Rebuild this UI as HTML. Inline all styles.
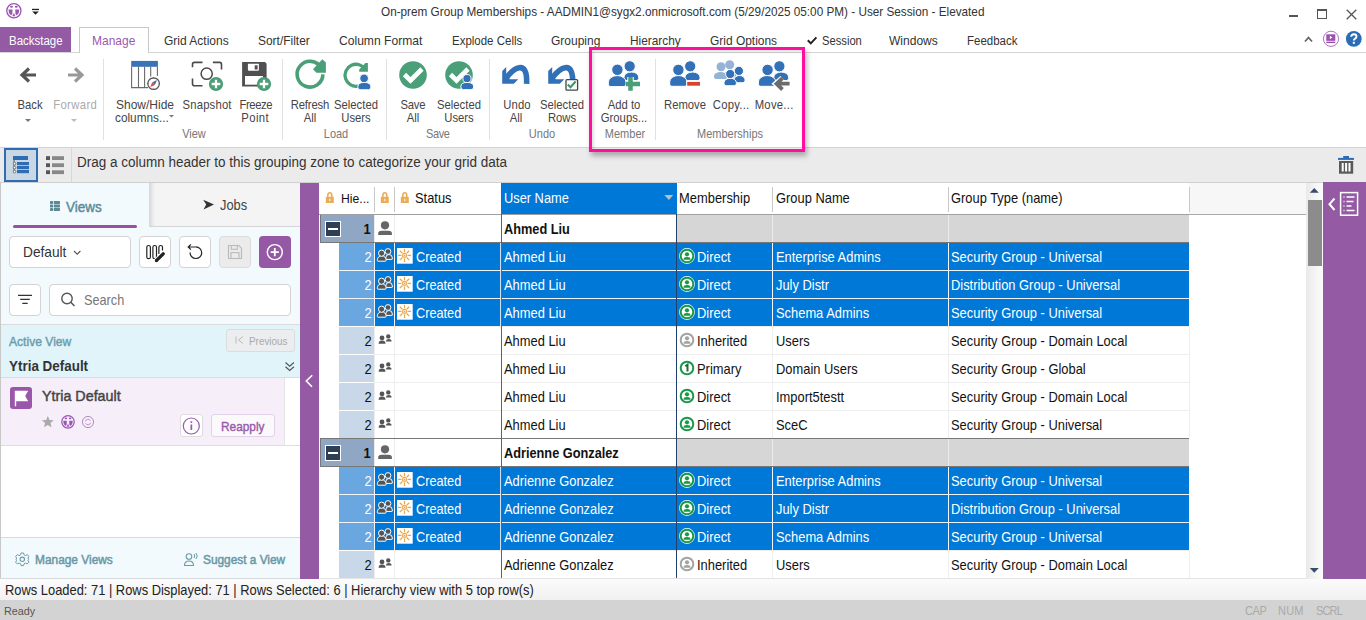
<!DOCTYPE html><html><head><meta charset="utf-8"><style>
html,body{margin:0;padding:0;}
body{width:1366px;height:620px;position:relative;overflow:hidden;background:#fff;font-family:'Liberation Sans', sans-serif;}
.t{position:absolute;white-space:nowrap;}
svg{overflow:visible;}
</style></head><body>
<svg style="position:absolute;left:0px;top:0px;" width="50" height="27" viewBox="0 0 50 27"><g transform="translate(13.87,10.7) scale(1.0)"><circle cx="0" cy="0" r="7.1" fill="none" stroke="#9b55b5" stroke-width="1.3"/><ellipse cx="-2.4" cy="-3.9" rx="1.5" ry="0.95" fill="#9b55b5"/><ellipse cx="2.4" cy="-3.9" rx="1.5" ry="0.95" fill="#9b55b5"/><path d="M-5.4,-1.2 H-1.35 L-1.6,3.4 Q-2.3,4.9 -3.2,4.4 Q-5.5,2.6 -5.4,-1.2Z M5.4,-1.2 H1.35 L1.6,3.4 Q2.3,4.9 3.2,4.4 Q5.5,2.6 5.4,-1.2Z" fill="#9b55b5"/><path d="M-1.6,5.6 L0,2.3 L1.6,5.6Z" fill="#9b55b5"/></g><rect x="32" y="8.8" width="7" height="1.3" fill="#222"/>
<path d="M32.2,11.5 L38.8,11.5 L35.5,14.8Z" fill="#222"/></svg>
<div class="t" style="left:380.5px;transform-origin:0 0;top:6.00px;font-size:12.70px;line-height:12.70px;color:#333;transform:scaleX(0.9259);">On-prem Group Memberships - AADMIN1@sygx2.onmicrosoft.com (5/29/2025 05:00 PM) - User Session - Elevated</div>
<div style="position:absolute;left:1289px;top:15.4px;width:9px;height:1.5px;background:#555;"></div>
<div style="position:absolute;left:1317px;top:9px;width:10px;height:9.6px;border:1px solid #555;border-top-width:2px;box-sizing:border-box;"></div>
<svg style="position:absolute;left:1346px;top:8.5px;" width="11" height="11" viewBox="0 0 11 11"><path d="M0.7,0.7 L10.3,10.3 M10.3,0.7 L0.7,10.3" stroke="#555" stroke-width="1.3"/></svg>
<div style="position:absolute;left:0px;top:52px;width:1366px;height:1px;background:#d4d4d4;"></div>
<div style="position:absolute;left:0px;top:27px;width:71px;height:25px;background:#945ba4;"></div>
<div class="t" style="left:9.4px;transform-origin:0 0;top:35.00px;font-size:12.42px;line-height:12.42px;color:#fff;transform:scaleX(0.9259);">Backstage</div>
<div style="position:absolute;left:79px;top:27px;width:70px;height:26px;background:#fff;border:1px solid #c9c9c9;border-bottom:none;box-sizing:border-box;"></div>
<div class="t" style="left:91.5px;transform-origin:0 0;top:35.00px;font-size:12.96px;line-height:12.96px;color:#9b59b0;transform:scaleX(0.9259);">Manage</div>
<div class="t" style="left:164px;transform-origin:0 0;top:35.00px;font-size:12.96px;line-height:12.96px;color:#333;transform:scaleX(0.9259);">Grid Actions</div>
<div class="t" style="left:258px;transform-origin:0 0;top:35.00px;font-size:12.91px;line-height:12.91px;color:#333;transform:scaleX(0.9259);">Sort/Filter</div>
<div class="t" style="left:339px;transform-origin:0 0;top:34.00px;font-size:13.07px;line-height:13.07px;color:#333;transform:scaleX(0.9259);">Column Format</div>
<div class="t" style="left:452px;transform-origin:0 0;top:35.00px;font-size:12.42px;line-height:12.42px;color:#333;transform:scaleX(0.9259);">Explode Cells</div>
<div class="t" style="left:551px;transform-origin:0 0;top:35.00px;font-size:12.96px;line-height:12.96px;color:#333;transform:scaleX(0.9259);">Grouping</div>
<div class="t" style="left:630.4px;transform-origin:0 0;top:35.00px;font-size:12.80px;line-height:12.80px;color:#333;transform:scaleX(0.9259);">Hierarchy</div>
<div class="t" style="left:710px;transform-origin:0 0;top:35.00px;font-size:12.91px;line-height:12.91px;color:#333;transform:scaleX(0.9259);">Grid Options</div>
<div class="t" style="left:821.5px;transform-origin:0 0;top:35.00px;font-size:12.10px;line-height:12.10px;color:#333;transform:scaleX(0.9259);">Session</div>
<div class="t" style="left:889px;transform-origin:0 0;top:34.00px;font-size:13.01px;line-height:13.01px;color:#333;transform:scaleX(0.9259);">Windows</div>
<div class="t" style="left:967px;transform-origin:0 0;top:35.00px;font-size:12.42px;line-height:12.42px;color:#333;transform:scaleX(0.9259);">Feedback</div>
<svg style="position:absolute;left:807px;top:35px;" width="12" height="10" viewBox="0 0 12 10"><path d="M0.8,5.3 L3.8,8.4 L9.4,2.4" fill="none" stroke="#222" stroke-width="2"/></svg>
<svg style="position:absolute;left:1304px;top:35px;" width="9" height="8" viewBox="0 0 9 8"><path d="M1,6.5 L4.5,2.5 L8,6.5" fill="none" stroke="#666" stroke-width="1.8"/></svg>
<svg style="position:absolute;left:1322px;top:30px;" width="18" height="18" viewBox="0 0 18 18"><circle cx="9" cy="8.8" r="7.6" fill="none" stroke="#a461b8" stroke-width="0.9"/>
<rect x="4.3" y="4.3" width="9" height="6.5" fill="#9b4fb0"/><rect x="4.3" y="11.6" width="9" height="1.5" fill="#9b4fb0"/>
<path d="M7.8,5.8 L10.6,7.5 L7.8,9.2Z" fill="#fff"/></svg>
<svg style="position:absolute;left:1345px;top:30px;" width="18" height="18" viewBox="0 0 18 18"><circle cx="8.8" cy="8.8" r="7.9" fill="#2a6cb5"/>
<path d="M6.2,6.8 Q6.3,4.2 8.9,4.2 Q11.5,4.2 11.5,6.6 Q11.5,8.2 9.6,9 Q8.8,9.4 8.8,10.6" fill="none" stroke="#fff" stroke-width="1.9"/>
<rect x="7.8" y="11.8" width="2" height="2" fill="#fff"/></svg>
<div style="position:absolute;left:0px;top:147px;width:1366px;height:1px;background:#d3d3d3;"></div>
<div style="position:absolute;left:103px;top:59px;width:1px;height:81px;background:#e1e1e1;"></div>
<div style="position:absolute;left:281.5px;top:59px;width:1px;height:81px;background:#e1e1e1;"></div>
<div style="position:absolute;left:385.5px;top:59px;width:1px;height:81px;background:#e1e1e1;"></div>
<div style="position:absolute;left:488.5px;top:59px;width:1px;height:81px;background:#e1e1e1;"></div>
<div style="position:absolute;left:654.5px;top:59px;width:1px;height:81px;background:#e1e1e1;"></div>
<svg style="position:absolute;left:18px;top:64px;" width="22" height="22" viewBox="0 0 22 22"><path d="M18,11 H5.5 M11,4.5 L4,11 L11,17.5" fill="none" stroke="#555" stroke-width="3.2" stroke-linejoin="miter"/></svg>
<svg style="position:absolute;left:66px;top:64px;" width="22" height="22" viewBox="0 0 22 22"><path d="M2,11 H14.5 M9,4.5 L16,11 L9,17.5" fill="none" stroke="#999" stroke-width="3.2"/></svg>
<div class="t" style="left:-170.5px;width:400px;text-align:center;transform-origin:50% 0;top:99.00px;font-size:12.20px;line-height:12.20px;color:#444;transform:scaleX(0.9259);">Back</div>
<div class="t" style="left:-125.5px;width:400px;text-align:center;transform-origin:50% 0;top:99.00px;font-size:12.20px;line-height:12.20px;color:#aaa;transform:scaleX(0.9259);letter-spacing:0.4px;text-indent:0.4px;">Forward</div>
<svg style="position:absolute;left:25px;top:119px;" width="6" height="4" viewBox="0 0 6 4"><path d="M0,0 L6,0 L3,3Z" fill="#777"/></svg>
<svg style="position:absolute;left:71px;top:119px;" width="6" height="4" viewBox="0 0 6 4"><path d="M0,0 L6,0 L3,3Z" fill="#bbb"/></svg>
<svg style="position:absolute;left:130px;top:60px;" width="34" height="32" viewBox="0 0 34 32"><rect x="1.2" y="0.9" width="26.7" height="5.9" fill="#3a72b8"/>
<path d="M1.6,6.8 V27.6 H18 M8.5,6.8 V27.6 M14.6,6.8 V27.6 M20.7,6.8 V16.5 M27.4,6.8 V16" fill="none" stroke="#6a6a6a" stroke-width="1.1"/>
<circle cx="23.6" cy="23.6" r="5.8" fill="#fff" stroke="#555" stroke-width="1.2"/>
<path d="M23.6,17.2 V18.5 M23.6,28.7 V30 M17.2,23.6 H18.5 M28.7,23.6 H30" stroke="#555" stroke-width="1"/>
<path d="M27,20.1 L24.9,24.9 L22.3,22.3Z" fill="#3a72b8"/><path d="M20.2,27.1 L22.3,22.3 L24.9,24.9Z" fill="#e04a3a"/></svg>
<div class="t" style="left:-55.5px;width:400px;text-align:center;transform-origin:50% 0;top:99.00px;font-size:12.96px;line-height:12.96px;color:#444;transform:scaleX(0.9259);">Show/Hide</div>
<div class="t" style="left:114.5px;transform-origin:0 0;top:112.00px;font-size:12.74px;line-height:12.74px;color:#444;transform:scaleX(0.9259);">columns...</div>
<svg style="position:absolute;left:169px;top:114.5px;" width="6" height="4" viewBox="0 0 6 4"><path d="M0,0 L5,0 L2.5,2.5Z" fill="#777"/></svg>
<div class="t" style="left:-6px;width:400px;text-align:center;transform-origin:50% 0;top:129.00px;font-size:11.88px;line-height:11.88px;color:#777;transform:scaleX(0.9259);">View</div>
<svg style="position:absolute;left:188px;top:56px;" width="40" height="40" viewBox="0 0 40 40"><path d="M4.5,11.2 V8.4 Q4.5,6.4 6.5,6.4 H14.5 M24.9,6.4 H31.5 Q33.5,6.4 33.5,8.4 V13.6 M4.5,22.6 V27.7 Q4.5,29.7 6.5,29.7 H14.5" fill="none" stroke="#4a4a4a" stroke-width="1.6"/>
<circle cx="18.7" cy="17.7" r="5.6" fill="none" stroke="#4a4a4a" stroke-width="1.5"/>
<circle cx="28" cy="28" r="7.1" fill="#4a9e78"/>
<path d="M28,23.7 V32.3 M23.7,28 H32.3" stroke="#fff" stroke-width="2.3"/></svg>
<div class="t" style="left:6.5px;width:400px;text-align:center;transform-origin:50% 0;top:99.00px;font-size:12.20px;line-height:12.20px;color:#444;transform:scaleX(0.9259);letter-spacing:0.2px;text-indent:0.2px;">Snapshot</div>
<svg style="position:absolute;left:240px;top:60px;" width="34" height="32" viewBox="0 0 34 32"><path d="M2.1,2.1 H25 L26.6,3.7 V26.6 H2.1Z" fill="#505050"/>
<path d="M7.9,3.7 H18.9 V9.8 Q18.9,10.8 17.9,10.8 H8.9 Q7.9,10.8 7.9,9.8Z" fill="#fff"/><rect x="14.7" y="5.3" width="2.9" height="4.2" fill="#505050"/>
<rect x="5" y="16" width="18" height="8.7" fill="#fff"/>
<circle cx="24" cy="24" r="7.1" fill="#4a9e78"/>
<path d="M24,19.7 V28.3 M19.7,24 H28.3" stroke="#fff" stroke-width="2.3"/></svg>
<div class="t" style="left:55.900000000000006px;width:400px;text-align:center;transform-origin:50% 0;top:99.00px;font-size:12.20px;line-height:12.20px;color:#444;transform:scaleX(0.9259);letter-spacing:-0.45px;text-indent:-0.45px;">Freeze</div>
<div class="t" style="left:55.30000000000001px;width:400px;text-align:center;transform-origin:50% 0;top:112.00px;font-size:12.20px;line-height:12.20px;color:#444;transform:scaleX(0.9259);letter-spacing:0.45px;text-indent:0.45px;">Point</div>
<svg style="position:absolute;left:290px;top:55px;" width="40" height="40" viewBox="0 0 40 40"><path d="M32.9,19.4 A12.9,12.9 0 1 1 31.2,12.8" fill="none" stroke="#4a9e78" stroke-width="3.6"/>
<path d="M32.3,4.3 L35.9,7.4 L35.9,17.8 L26.4,17.8 L23,14.2Z" fill="#4a9e78"/></svg>
<div class="t" style="left:109.5px;width:400px;text-align:center;transform-origin:50% 0;top:99.00px;font-size:12.20px;line-height:12.20px;color:#444;transform:scaleX(0.9259);letter-spacing:-0.15px;text-indent:-0.15px;">Refresh</div>
<div class="t" style="left:109.80000000000001px;width:400px;text-align:center;transform-origin:50% 0;top:112.00px;font-size:12.20px;line-height:12.20px;color:#444;transform:scaleX(0.9259);">All</div>
<svg style="position:absolute;left:340px;top:55px;" width="40" height="40" viewBox="0 0 40 40"><path d="M18,31.1 A11,11 0 1 1 25.4,14.5" fill="none" stroke="#4a9e78" stroke-width="3.3"/>
<path d="M25.4,7.9 L27.9,7.9 L27.9,16.8 L19.2,16.8 L19.2,14.6Z" fill="#4a9e78"/>
<circle cx="24.1" cy="23.4" r="4.3" fill="#3270b8" stroke="#fff" stroke-width="0.9"/>
<path d="M17.8,32 Q17.8,27.4 24.3,27.4 Q30.9,27.4 30.9,32 Q30.9,34.7 28.5,34.7 H20.2 Q17.8,34.7 17.8,32Z" fill="#3270b8" stroke="#fff" stroke-width="0.9"/></svg>
<div class="t" style="left:155.8px;width:400px;text-align:center;transform-origin:50% 0;top:99.00px;font-size:12.20px;line-height:12.20px;color:#444;transform:scaleX(0.9259);">Selected</div>
<div class="t" style="left:156.3px;width:400px;text-align:center;transform-origin:50% 0;top:112.00px;font-size:12.20px;line-height:12.20px;color:#444;transform:scaleX(0.9259);">Users</div>
<div class="t" style="left:135.5px;width:400px;text-align:center;transform-origin:50% 0;top:129.00px;font-size:11.88px;line-height:11.88px;color:#777;transform:scaleX(0.9259);">Load</div>
<svg style="position:absolute;left:398px;top:60px;" width="30" height="30" viewBox="0 0 30 30"><circle cx="15" cy="15" r="13.8" fill="#4a9e78"/>
<path d="M6.5,14.5 L12.5,20.5 L24,9" fill="none" stroke="#fff" stroke-width="4.6"/></svg>
<div class="t" style="left:213px;width:400px;text-align:center;transform-origin:50% 0;top:99.00px;font-size:12.20px;line-height:12.20px;color:#444;transform:scaleX(0.9259);letter-spacing:-0.3px;text-indent:-0.3px;">Save</div>
<div class="t" style="left:212.8px;width:400px;text-align:center;transform-origin:50% 0;top:112.00px;font-size:12.20px;line-height:12.20px;color:#444;transform:scaleX(0.9259);">All</div>
<svg style="position:absolute;left:444px;top:60px;" width="32" height="32" viewBox="0 0 32 32"><circle cx="15" cy="15" r="13.8" fill="#4a9e78"/>
<path d="M6.5,14.5 L12.5,20.5 L24,9" fill="none" stroke="#fff" stroke-width="4.6"/>
<circle cx="23" cy="18.6" r="4.1" fill="#3270b8" stroke="#fff" stroke-width="1"/>
<path d="M16.8,26.8 Q16.8,22.4 23.2,22.4 Q29.7,22.4 29.7,26.8 Q29.7,29.7 27,29.7 H19.5 Q16.8,29.7 16.8,26.8Z" fill="#3270b8" stroke="#fff" stroke-width="1"/></svg>
<div class="t" style="left:258.8px;width:400px;text-align:center;transform-origin:50% 0;top:99.00px;font-size:12.20px;line-height:12.20px;color:#444;transform:scaleX(0.9259);">Selected</div>
<div class="t" style="left:259.2px;width:400px;text-align:center;transform-origin:50% 0;top:112.00px;font-size:12.20px;line-height:12.20px;color:#444;transform:scaleX(0.9259);">Users</div>
<div class="t" style="left:238.39999999999998px;width:400px;text-align:center;transform-origin:50% 0;top:129.00px;font-size:11.88px;line-height:11.88px;color:#777;transform:scaleX(0.9259);letter-spacing:-0.4px;text-indent:-0.4px;">Save</div>
<svg style="position:absolute;left:496px;top:58px;" width="40" height="30" viewBox="0 0 40 30"><path d="M6.2,25.8 V13 L10.2,9 V16.8 L13.8,21.3 H22.3 L17.8,25.8Z" fill="#3270b8"/>
<path d="M30.6,25.8 C31.2,13.5 28,8.6 23,9.8 C18.5,10.6 14.5,14.5 10.5,19.5" fill="none" stroke="#3270b8" stroke-width="5.6"/></svg>
<div class="t" style="left:316.6px;width:400px;text-align:center;transform-origin:50% 0;top:99.00px;font-size:12.20px;line-height:12.20px;color:#444;transform:scaleX(0.9259);letter-spacing:0.1px;text-indent:0.1px;">Undo</div>
<div class="t" style="left:315.79999999999995px;width:400px;text-align:center;transform-origin:50% 0;top:112.00px;font-size:12.20px;line-height:12.20px;color:#444;transform:scaleX(0.9259);">All</div>
<svg style="position:absolute;left:542px;top:58px;" width="40" height="36" viewBox="0 0 40 36"><path d="M6.2,25.8 V13 L10.2,9 V16.8 L13.8,21.3 H22.3 L17.8,25.8Z" fill="#3270b8"/>
<path d="M30.6,25.8 C31.2,13.5 28,8.6 23,9.8 C18.5,10.6 14.5,14.5 10.5,19.5" fill="none" stroke="#3270b8" stroke-width="5.6"/><rect x="24" y="21.6" width="11.6" height="10.6" fill="#fff" stroke="#444" stroke-width="1.3" rx="1"/>
<path d="M25.8,26.4 L28.5,29.2 L33.6,23.6" fill="none" stroke="#3a9a6a" stroke-width="2.2"/></svg>
<div class="t" style="left:362px;width:400px;text-align:center;transform-origin:50% 0;top:99.00px;font-size:12.20px;line-height:12.20px;color:#444;transform:scaleX(0.9259);">Selected</div>
<div class="t" style="left:362.20000000000005px;width:400px;text-align:center;transform-origin:50% 0;top:112.00px;font-size:12.20px;line-height:12.20px;color:#444;transform:scaleX(0.9259);">Rows</div>
<div class="t" style="left:341.79999999999995px;width:400px;text-align:center;transform-origin:50% 0;top:129.00px;font-size:11.88px;line-height:11.88px;color:#777;transform:scaleX(0.9259);">Undo</div>
<svg style="position:absolute;left:600px;top:55px;" width="45" height="40" viewBox="0 0 45 40"><path d="M24,23.30 V22.10 A7.35,5.10 0 0 1 38.700000000000045,22.10 V23.30 Q38.700000000000045,25.5 36.50,25.5 H26.20 Q24,25.5 24,23.30Z" fill="#3270b8" stroke="#fff" stroke-width="1"/><circle cx="29.700000000000045" cy="11.299999999999997" r="5.6" fill="#3270b8" stroke="#fff" stroke-width="1"/><path d="M8.399999999999977,29.40 V27.20 A8.80,6.60 0 0 1 26,27.20 V29.40 Q26,31.599999999999994 23.80,31.599999999999994 H10.60 Q8.399999999999977,31.599999999999994 8.399999999999977,29.40Z" fill="#3270b8" stroke="#fff" stroke-width="1"/><circle cx="17.399999999999977" cy="14.799999999999997" r="5.7" fill="#3270b8" stroke="#fff" stroke-width="1"/><path d="M30.5,22 V35.8 M26,29 H40" stroke="#fff" stroke-width="6.5"/><path d="M30.5,22 V35.8 M26,29 H40" stroke="#4a9e78" stroke-width="4.5"/></svg>
<div class="t" style="left:424.20000000000005px;width:400px;text-align:center;transform-origin:50% 0;top:99.00px;font-size:12.20px;line-height:12.20px;color:#444;transform:scaleX(0.9259);">Add to</div>
<div class="t" style="left:423.6px;width:400px;text-align:center;transform-origin:50% 0;top:112.00px;font-size:12.20px;line-height:12.20px;color:#444;transform:scaleX(0.9259);">Groups...</div>
<div class="t" style="left:425.20000000000005px;width:400px;text-align:center;transform-origin:50% 0;top:129.00px;font-size:11.88px;line-height:11.88px;color:#777;transform:scaleX(0.9259);">Member</div>
<svg style="position:absolute;left:660px;top:55px;" width="45" height="40" viewBox="0 0 45 40"><path d="M25,23.40 V22.16 A7.50,5.16 0 0 1 40,22.16 V23.40 Q40,25.599999999999994 37.80,25.599999999999994 H27.20 Q25,25.599999999999994 25,23.40Z" fill="#3270b8" stroke="#fff" stroke-width="1"/><circle cx="30.200000000000045" cy="11.299999999999997" r="5.6" fill="#3270b8" stroke="#fff" stroke-width="1"/><path d="M9.700000000000045,29.10 V26.98 A8.65,6.48 0 0 1 27,26.98 V29.10 Q27,31.299999999999997 24.80,31.299999999999997 H11.90 Q9.700000000000045,31.299999999999997 9.700000000000045,29.10Z" fill="#3270b8" stroke="#fff" stroke-width="1"/><circle cx="18.399999999999977" cy="14.900000000000006" r="5.7" fill="#3270b8" stroke="#fff" stroke-width="1"/><rect x="26.2" y="25.9" width="14" height="5" fill="#fff"/><rect x="27.2" y="26.9" width="12.8" height="3.8" fill="#d9432e"/></svg>
<div class="t" style="left:484.70000000000005px;width:400px;text-align:center;transform-origin:50% 0;top:99.00px;font-size:12.20px;line-height:12.20px;color:#444;transform:scaleX(0.9259);">Remove</div>
<svg style="position:absolute;left:710px;top:55px;" width="45" height="40" viewBox="0 0 45 40"><path d="M14.5,20.30 V19.50 A5.75,4.50 0 0 1 26,19.50 V20.30 Q26,22.5 23.80,22.5 H16.70 Q14.5,22.5 14.5,20.30Z" fill="#95b3d6" /><circle cx="19.700000000000045" cy="9.700000000000003" r="4.5" fill="#95b3d6" /><path d="M4,21.90 V21.20 A6.50,4.20 0 0 1 17,21.20 V21.90 Q17,24 14.90,24 H6.10 Q4,24 4,21.90Z" fill="#95b3d6" /><circle cx="11" cy="11.799999999999997" r="4.5" fill="#95b3d6" /><path d="M24,25.54 V24.82 A5.50,4.32 0 0 1 35,24.82 V25.54 Q35,27.700000000000003 32.84,27.700000000000003 H26.16 Q24,27.700000000000003 24,25.54Z" fill="#3270b8" stroke="#fff" stroke-width="1"/><circle cx="28.899999999999977" cy="15.900000000000006" r="4.6" fill="#3270b8" stroke="#fff" stroke-width="1"/><path d="M14,28.50 V27.70 A6.20,4.50 0 0 1 26.399999999999977,27.70 V28.50 Q26.399999999999977,30.700000000000003 24.20,30.700000000000003 H16.20 Q14,30.700000000000003 14,28.50Z" fill="#3270b8" stroke="#fff" stroke-width="1"/><circle cx="20.200000000000045" cy="19" r="4.6" fill="#3270b8" stroke="#fff" stroke-width="1"/></svg>
<div class="t" style="left:530.6px;width:400px;text-align:center;transform-origin:50% 0;top:99.00px;font-size:12.20px;line-height:12.20px;color:#444;transform:scaleX(0.9259);letter-spacing:0.25px;text-indent:0.25px;">Copy...</div>
<svg style="position:absolute;left:755px;top:55px;" width="45" height="40" viewBox="0 0 45 40"><path d="M18.799999999999955,23.40 V22.16 A7.40,5.16 0 0 1 33.60000000000002,22.16 V23.40 Q33.60000000000002,25.599999999999994 31.40,25.599999999999994 H21.00 Q18.799999999999955,25.599999999999994 18.799999999999955,23.40Z" fill="#3270b8" stroke="#fff" stroke-width="1"/><circle cx="24.399999999999977" cy="11.299999999999997" r="5.6" fill="#3270b8" stroke="#fff" stroke-width="1"/><path d="M3.3999999999999773,29.10 V26.98 A8.70,6.48 0 0 1 20.799999999999955,26.98 V29.10 Q20.799999999999955,31.299999999999997 18.60,31.299999999999997 H5.60 Q3.3999999999999773,31.299999999999997 3.3999999999999773,29.10Z" fill="#3270b8" stroke="#fff" stroke-width="1"/><circle cx="12.600000000000023" cy="14.900000000000006" r="5.7" fill="#3270b8" stroke="#fff" stroke-width="1"/><path d="M34.6,28.7 H22 M27.5,23.2 L21,28.8 L27.5,34.5" fill="none" stroke="#fff" stroke-width="6"/><path d="M34.6,28.7 H22.5 M27.5,23.2 L21.5,28.8 L27.5,34.5" fill="none" stroke="#6b6b6b" stroke-width="3.8"/></svg>
<div class="t" style="left:573.5px;width:400px;text-align:center;transform-origin:50% 0;top:99.00px;font-size:12.20px;line-height:12.20px;color:#444;transform:scaleX(0.9259);letter-spacing:0.3px;text-indent:0.3px;">Move...</div>
<div class="t" style="left:529.8px;width:400px;text-align:center;transform-origin:50% 0;top:129.00px;font-size:11.88px;line-height:11.88px;color:#777;transform:scaleX(0.9259);">Memberships</div>
<div style="position:absolute;left:0px;top:148px;width:1366px;height:34px;background:#ebebeb;"></div>
<div style="position:absolute;left:4px;top:148px;width:34px;height:33.5px;background:#c9d6e3;border:2px solid #2e6db4;box-sizing:border-box;"></div>
<svg style="position:absolute;left:4px;top:148px;" width="34" height="34" viewBox="0 0 34 34"><rect x="9" y="8" width="15" height="4" fill="#2e6db4"/>
<rect x="13" y="14" width="12" height="3.2" fill="#2e6db4"/><rect x="13" y="18" width="12" height="3.2" fill="#2e6db4"/><rect x="13" y="22" width="12" height="3.2" fill="#2e6db4"/>
<path d="M10,12 V23.6" stroke="#555" stroke-width="0.9"/>
<circle cx="10.5" cy="15.6" r="1.3" fill="#fff" stroke="#555" stroke-width="0.8"/><circle cx="10.5" cy="19.6" r="1.3" fill="#fff" stroke="#555" stroke-width="0.8"/><circle cx="10.5" cy="23.6" r="1.3" fill="#fff" stroke="#555" stroke-width="0.8"/></svg>
<div style="position:absolute;left:71px;top:148px;width:1px;height:34px;background:#d8d8d8;"></div>
<svg style="position:absolute;left:40px;top:148px;" width="32" height="34" viewBox="0 0 32 34"><rect x="6" y="8.2" width="4" height="3.8" fill="#555"/><rect x="12" y="8.2" width="12" height="3.8" fill="#888"/>
<rect x="6" y="15.3" width="4" height="3.8" fill="#555"/><rect x="12" y="15.3" width="12" height="3.8" fill="#888"/>
<rect x="6" y="22.3" width="4" height="3.8" fill="#555"/><rect x="12" y="22.3" width="12" height="3.8" fill="#888"/></svg>
<div class="t" style="left:77.3px;transform-origin:0 0;top:155.00px;font-size:14.58px;line-height:14.58px;color:#333;transform:scaleX(0.9259);">Drag a column header to this grouping zone to categorize your grid data</div>
<svg style="position:absolute;left:1336px;top:154px;" width="20" height="22" viewBox="0 0 20 22"><rect x="2" y="3.9" width="16" height="2" fill="#2e6db4"/><rect x="7.2" y="2" width="5.8" height="2" fill="#2e6db4"/>
<rect x="3" y="7" width="14.2" height="12.7" fill="#5a5a5a"/><rect x="5.7" y="9" width="2" height="8.5" fill="#fff"/><rect x="9.1" y="9" width="2" height="8.5" fill="#fff"/><rect x="12.5" y="9" width="2" height="8.5" fill="#fff"/></svg>
<div style="position:absolute;left:0px;top:182px;width:1366px;height:1px;background:#d0d0d0;"></div>
<div style="position:absolute;left:0px;top:183px;width:300px;height:396px;background:#f3fafd;"></div>
<div style="position:absolute;left:0px;top:183px;width:1px;height:396px;background:#c8c8c8;"></div>
<div style="position:absolute;left:149px;top:183px;width:151px;height:44px;background:#f4f4f4;border-bottom:1px solid #d6d6d6;box-sizing:border-box;box-shadow:inset 6px 0 5px -4px rgba(0,0,0,0.16);"></div>
<div style="position:absolute;left:149px;top:191px;width:1px;height:36px;background:#d8d8d8;"></div>
<div style="position:absolute;left:1px;top:183px;width:148px;height:44px;background:#f3fafd;border-top-right-radius:6px;"></div>
<svg style="position:absolute;left:49px;top:200px;" width="12" height="12" viewBox="0 0 12 12"><g fill="#5b8a96"><rect x="1" y="1" width="3" height="2.9" rx="0.6"/><rect x="4.7" y="1" width="6.3" height="2.9" rx="0.6"/><rect x="1" y="4.5" width="3" height="2.9" rx="0.6"/><rect x="4.7" y="4.5" width="6.3" height="2.9" rx="0.6"/><rect x="1" y="8" width="3" height="2.9" rx="0.6"/><rect x="4.7" y="8" width="6.3" height="2.9" rx="0.6"/></g></svg>
<div class="t" style="left:66px;transform-origin:0 0;top:200.00px;font-size:14.58px;line-height:14.58px;color:#5a8a98;transform:scaleX(0.9259);-webkit-text-stroke:0.45px #5a8a98;">Views</div>
<div style="position:absolute;left:13px;top:225px;width:124px;height:3px;background:#9b4fa0;border-radius:2px;"></div>
<svg style="position:absolute;left:202px;top:199px;" width="14" height="13" viewBox="0 0 14 13"><path d="M1.2,0.8 L12,5.6 L1.5,10.6 L4.2,5.6Z" fill="#333"/></svg>
<div class="t" style="left:219.7px;transform-origin:0 0;top:199.00px;font-size:13.93px;line-height:13.93px;color:#444;transform:scaleX(0.9259);">Jobs</div>
<div style="position:absolute;left:9px;top:236px;width:122px;height:32px;background:#fff;border:1px solid #d3d3d3;border-radius:4px;box-sizing:border-box;"></div>
<div class="t" style="left:22.6px;transform-origin:0 0;top:245.00px;font-size:14.80px;line-height:14.80px;color:#333;transform:scaleX(0.9259);">Default</div>
<svg style="position:absolute;left:73px;top:250px;" width="9" height="6" viewBox="0 0 9 6"><path d="M1,1 L4.2,4.2 L7.4,1" fill="none" stroke="#555" stroke-width="1.1"/></svg>
<div style="position:absolute;left:139px;top:236px;width:32px;height:32px;background:#fff;border:1px solid #d3d3d3;border-radius:4px;box-sizing:border-box;"></div>
<svg style="position:absolute;left:139px;top:236px;" width="32" height="32" viewBox="0 0 32 32"><rect x="7.8" y="9.5" width="3.6" height="13.2" rx="1.8" fill="none" stroke="#222" stroke-width="1.2"/><rect x="13.9" y="9.5" width="3.6" height="13.2" rx="1.8" fill="none" stroke="#222" stroke-width="1.2"/><path d="M19.9,18 V11.3 Q19.9,9.5 21.7,9.5 Q23.5,9.5 23.5,11.3 V14.5" fill="none" stroke="#222" stroke-width="1.2"/><path d="M17.6,24.4 L24.2,17.8" stroke="#fff" stroke-width="5.2" stroke-linecap="round"/><path d="M17.6,24.4 L24.2,17.8" stroke="#222" stroke-width="3.3" stroke-linecap="round"/><path d="M16.1,25.9 L16.6,23.2 L18.8,25.4Z" fill="#222"/></svg>
<div style="position:absolute;left:179px;top:236px;width:32px;height:32px;background:#fff;border:1px solid #d3d3d3;border-radius:4px;box-sizing:border-box;"></div>
<svg style="position:absolute;left:179px;top:236px;" width="32" height="32" viewBox="0 0 32 32"><path d="M16.9,10.9 A5.8,5.8 0 1 1 11.1,16.6" fill="none" stroke="#222" stroke-width="1.2"/><path d="M9.2,11 H16.9 M11.9,8.4 L9.2,11 L11.9,13.7" fill="none" stroke="#222" stroke-width="1.2"/></svg>
<div style="position:absolute;left:219px;top:236px;width:32px;height:32px;background:#ebebeb;border:1px solid #dcdcdc;border-radius:4px;box-sizing:border-box;"></div>
<svg style="position:absolute;left:219px;top:236px;" width="32" height="32" viewBox="0 0 32 32"><path d="M9.5,9.5 H19.8 L22.5,12.2 V22.5 H9.5Z" fill="none" stroke="#bbb" stroke-width="1.2"/><rect x="12.3" y="9.5" width="6" height="3.8" fill="none" stroke="#bbb" stroke-width="1.1"/><rect x="12" y="16.6" width="8" height="5.9" fill="none" stroke="#bbb" stroke-width="1.1"/></svg>
<div style="position:absolute;left:259px;top:236px;width:32px;height:32px;background:#9558a5;border-radius:4px;"></div>
<svg style="position:absolute;left:259px;top:236px;" width="32" height="32" viewBox="0 0 32 32"><circle cx="15.8" cy="16.1" r="7.5" fill="none" stroke="#fff" stroke-width="1.4"/><path d="M15.8,12 V20.2 M11.7,16.1 H19.9" stroke="#fff" stroke-width="1.8"/></svg>
<div style="position:absolute;left:9px;top:284px;width:32px;height:32px;background:#fff;border:1px solid #d3d3d3;border-radius:4px;box-sizing:border-box;"></div>
<svg style="position:absolute;left:9px;top:284px;" width="32" height="32" viewBox="0 0 32 32"><path d="M9,11.3 H23 M11.2,15.4 H20.8 M13.3,19.4 H18.7" stroke="#333" stroke-width="1.2"/></svg>
<div style="position:absolute;left:49px;top:284px;width:242px;height:32px;background:#fff;border:1px solid #d3d3d3;border-radius:4px;box-sizing:border-box;"></div>
<svg style="position:absolute;left:57px;top:289px;" width="22" height="22" viewBox="0 0 22 22"><circle cx="10" cy="9.5" r="5.2" fill="none" stroke="#555" stroke-width="1.4"/><path d="M13.8,13.3 L17.5,17" stroke="#555" stroke-width="1.5"/></svg>
<div class="t" style="left:84.2px;transform-origin:0 0;top:294.00px;font-size:13.72px;line-height:13.72px;color:#777;transform:scaleX(0.9259);">Search</div>
<div style="position:absolute;left:1px;top:324px;width:299px;height:54px;background:#e0f4fa;border-top:1px solid #dcdadd;border-bottom:1px solid #d9dcde;box-sizing:border-box;"></div>
<div class="t" style="left:9.4px;transform-origin:0 0;top:335.00px;font-size:13.07px;line-height:13.07px;color:#6b9aab;transform:scaleX(0.9259);-webkit-text-stroke:0.4px #6b9aab;">Active View</div>
<div style="position:absolute;left:226px;top:329.4px;width:68.6px;height:23px;background:#ebedee;border:1px solid #dadddf;border-radius:3px;box-sizing:border-box;"></div>
<svg style="position:absolute;left:234px;top:334px;" width="12" height="12" viewBox="0 0 12 12"><path d="M2,2.5 V9.5 M9,2.5 L4.5,6 L9,9.5" fill="none" stroke="#bbb" stroke-width="1"/></svg>
<div class="t" style="left:249px;transform-origin:0 0;top:336.00px;font-size:10.69px;line-height:10.69px;color:#aaa;transform:scaleX(0.9259);">Previous</div>
<svg style="position:absolute;left:284px;top:361px;" width="12" height="12" viewBox="0 0 12 12"><path d="M1.5,1.5 L5.7,5.2 L9.9,1.5 M1.5,5.8 L5.7,9.5 L9.9,5.8" fill="none" stroke="#555" stroke-width="1.2"/></svg>
<div class="t" style="left:9.4px;transform-origin:0 0;top:359.00px;font-size:14.50px;line-height:14.50px;color:#333;font-weight:bold;transform:scaleX(0.9259);">Ytria Default</div>
<div style="position:absolute;left:1px;top:378px;width:282.5px;height:68px;background:#f6eef8;border-bottom:1px solid #ddd;box-sizing:border-box;"></div>
<div style="position:absolute;left:283.5px;top:378px;width:16.5px;height:68px;background:#fff;border-left:1px solid #e4e4e4;border-bottom:1px solid #ddd;box-sizing:border-box;"></div>
<div style="position:absolute;left:10px;top:387px;width:22px;height:21.5px;background:#9a56a8;border-radius:3px;"></div>
<svg style="position:absolute;left:10px;top:387px;" width="22" height="22" viewBox="0 0 22 22"><path d="M4.8,19.2 V3.8 H18.2 L15.2,9 L18.2,14.2 H6.2 V19.2Z" fill="#fff"/></svg>
<div class="t" style="left:41.5px;transform-origin:0 0;top:388.00px;font-size:15.44px;line-height:15.44px;color:#444;transform:scaleX(0.9259);-webkit-text-stroke:0.45px #444;">Ytria Default</div>
<svg style="position:absolute;left:41px;top:415px;" width="14" height="13" viewBox="0 0 14 13"><path d="M6.8,1 L8.5,5 L12.7,5.3 L9.5,8 L10.6,12.2 L6.8,9.9 L3,12.2 L4.1,8 L0.9,5.3 L5.1,5Z" fill="#aaa"/></svg>
<svg style="position:absolute;left:60px;top:414px;" width="17" height="16" viewBox="0 0 17 16"><g transform="translate(8,7.8) scale(0.88)"><circle cx="0" cy="0" r="7.1" fill="none" stroke="#9b55b5" stroke-width="1.4"/><ellipse cx="-2.4" cy="-3.9" rx="1.5" ry="0.95" fill="#9b55b5"/><ellipse cx="2.4" cy="-3.9" rx="1.5" ry="0.95" fill="#9b55b5"/><path d="M-5.4,-1.2 H-1.35 L-1.6,3.4 Q-2.3,4.9 -3.2,4.4 Q-5.5,2.6 -5.4,-1.2Z M5.4,-1.2 H1.35 L1.6,3.4 Q2.3,4.9 3.2,4.4 Q5.5,2.6 5.4,-1.2Z" fill="#9b55b5"/><path d="M-1.6,5.6 L0,2.3 L1.6,5.6Z" fill="#9b55b5"/></g></svg>
<svg style="position:absolute;left:81px;top:415px;" width="14" height="14" viewBox="0 0 14 14"><circle cx="7" cy="7" r="5.6" fill="none" stroke="#b78ac4" stroke-width="1"/><path d="M4.3,6.3 A2.8,2.8 0 0 1 9.5,5.8 M9.7,7.7 A2.8,2.8 0 0 1 4.5,8.2" fill="none" stroke="#b78ac4" stroke-width="0.9"/></svg>
<div style="position:absolute;left:179.5px;top:414.3px;width:23.1px;height:23.1px;background:#fff;border:1px solid #ddd;border-radius:3px;box-sizing:border-box;"></div>
<svg style="position:absolute;left:179.5px;top:414.3px;" width="23" height="23" viewBox="0 0 23 23"><circle cx="11.3" cy="12" r="8" fill="none" stroke="#9b55b5" stroke-width="1.2"/><rect x="10.5" y="10.5" width="1.7" height="5.5" fill="#9b55b5"/><rect x="10.5" y="7.3" width="1.7" height="1.7" fill="#9b55b5"/></svg>
<div style="position:absolute;left:211.4px;top:414.3px;width:63.3px;height:23.1px;background:#fcf9fd;border:1px solid #e3d3e8;border-radius:3px;box-sizing:border-box;"></div>
<div class="t" style="left:221.2px;transform-origin:0 0;top:421.00px;font-size:12.80px;line-height:12.80px;color:#9a5aa8;transform:scaleX(0.9259);-webkit-text-stroke:0.4px #9a5aa8;">Reapply</div>
<div style="position:absolute;left:1px;top:446px;width:299px;height:92px;background:#fff;border-bottom:1px solid #d6dadc;box-sizing:border-box;"></div>
<svg style="position:absolute;left:15px;top:552px;" width="15" height="15" viewBox="0 0 15 15"><circle cx="7.3" cy="7.3" r="2.2" fill="none" stroke="#6b9aa8" stroke-width="1.1"/><path d="M6,1 H8.6 L9,2.8 L10.6,3.6 L12.2,2.6 L14,4.4 L13,6 L13.5,7.3 L13,8.6 L14,10.2 L12.2,12 L10.6,11 L9,11.8 L8.6,13.6 H6 L5.6,11.8 L4,11 L2.4,12 L0.6,10.2 L1.6,8.6 L1.1,7.3 L1.6,6 L0.6,4.4 L2.4,2.6 L4,3.6 L5.6,2.8Z" fill="none" stroke="#6b9aa8" stroke-width="1"/></svg>
<div class="t" style="left:34.7px;transform-origin:0 0;top:554.00px;font-size:12.85px;line-height:12.85px;color:#6a98a6;transform:scaleX(0.9259);-webkit-text-stroke:0.5px #6a98a6;">Manage Views</div>
<svg style="position:absolute;left:183px;top:552px;" width="16" height="16" viewBox="0 0 16 16"><circle cx="6" cy="4.5" r="2.8" fill="none" stroke="#6b9aa8" stroke-width="1.1"/><path d="M1.5,13.5 Q1.5,9 6,9 Q10.5,9 10.5,13.5Z" fill="none" stroke="#6b9aa8" stroke-width="1.1"/><path d="M11,2 Q12.5,4 11,6 M13,1 Q15.5,4 13,7" fill="none" stroke="#6b9aa8" stroke-width="1"/></svg>
<div class="t" style="left:203.3px;transform-origin:0 0;top:554.00px;font-size:12.80px;line-height:12.80px;color:#6a98a6;transform:scaleX(0.9259);-webkit-text-stroke:0.5px #6a98a6;">Suggest a View</div>
<div style="position:absolute;left:300px;top:183px;width:19px;height:396px;background:#945ba4;"></div>
<svg style="position:absolute;left:303px;top:372px;" width="12" height="16" viewBox="0 0 12 16"><path d="M9.2,3.2 L3.3,9 L9,14.8" fill="none" stroke="#fff" stroke-width="1.6"/></svg>
<div style="position:absolute;left:1322.5px;top:182px;width:43.5px;height:397.5px;background:#945ba4;"></div>
<svg style="position:absolute;left:1326px;top:196px;" width="12" height="16" viewBox="0 0 12 16"><path d="M8.5,2.5 L3.5,8.2 L8.5,14" fill="none" stroke="#fff" stroke-width="2"/></svg>
<svg style="position:absolute;left:1339px;top:191px;" width="21" height="26" viewBox="0 0 21 26"><rect x="1.6" y="1.6" width="17" height="22.6" fill="none" stroke="#fff" stroke-width="1.5"/><path d="M4.5,6 H5.5 M4.5,10.5 H5.5 M4.5,15 H5.5 M4.5,19.5 H5.5" stroke="#fff" stroke-width="1.3"/><path d="M7.5,6 H15.5 M7.5,10.5 H14.5 M7.5,15 H12.5 M7.5,19.5 H15.5" stroke="#fff" stroke-width="1.3"/></svg>
<div style="position:absolute;left:0px;top:579px;width:1366px;height:21px;background:linear-gradient(#fbfbfb,#f1f1f1);"></div>
<div class="t" style="left:5.2px;transform-origin:0 0;top:584.00px;font-size:13.93px;line-height:13.93px;color:#222;transform:scaleX(0.9259);">Rows Loaded: 71 | Rows Displayed: 71 | Rows Selected: 6 | Hierarchy view with 5 top row(s)</div>
<div style="position:absolute;left:0px;top:600px;width:1366px;height:20px;background:#d3d3d3;"></div>
<div class="t" style="left:3.5px;transform-origin:0 0;top:605.00px;font-size:11.66px;line-height:11.66px;color:#555;transform:scaleX(0.9259);">Ready</div>
<div class="t" style="left:1244.7px;transform-origin:0 0;top:606.00px;font-size:11.88px;line-height:11.88px;color:#aaa;transform:scaleX(0.9259);letter-spacing:-0.4px;">CAP</div>
<div class="t" style="left:1277.8px;transform-origin:0 0;top:606.00px;font-size:11.88px;line-height:11.88px;color:#aaa;transform:scaleX(0.9259);letter-spacing:0.2px;">NUM</div>
<div class="t" style="left:1315.5px;transform-origin:0 0;top:606.00px;font-size:11.88px;line-height:11.88px;color:#aaa;transform:scaleX(0.9259);letter-spacing:-0.9px;">SCRL</div>
<div style="position:absolute;left:319px;top:183px;width:987px;height:396px;background:#fff;"></div>
<div style="position:absolute;left:319px;top:183px;width:870px;height:31px;background:#fff;"></div>
<div style="position:absolute;left:1189px;top:183px;width:117px;height:31px;background:#f7f7f7;"></div>
<div style="position:absolute;left:319px;top:213.5px;width:987px;height:1px;background:#a8a8a8;"></div>
<div style="position:absolute;left:374px;top:187px;width:1px;height:25px;background:#c8c8c8;"></div>
<div style="position:absolute;left:394px;top:187px;width:1px;height:25px;background:#c8c8c8;"></div>
<div style="position:absolute;left:772px;top:187px;width:1px;height:25px;background:#c8c8c8;"></div>
<div style="position:absolute;left:948px;top:187px;width:1px;height:25px;background:#c8c8c8;"></div>
<div style="position:absolute;left:1189px;top:187px;width:1px;height:25px;background:#c8c8c8;"></div>
<div style="position:absolute;left:501px;top:183px;width:176px;height:30.5px;background:#0078d7;"></div>
<svg style="position:absolute;left:325px;top:192px;" width="10" height="11" viewBox="0 0 10 11"><path d="M2.8,5 V3.6 Q2.8,0.8 4.8,0.8 Q6.8,0.8 6.8,3.6 V5" fill="none" stroke="#e9ad59" stroke-width="1.6"/><rect x="0.8" y="4.8" width="8" height="6.2" fill="#e9ad59"/><rect x="4.3" y="6.8" width="1" height="2.3" fill="#fff"/></svg>
<svg style="position:absolute;left:380px;top:192px;" width="10" height="11" viewBox="0 0 10 11"><path d="M2.8,5 V3.6 Q2.8,0.8 4.8,0.8 Q6.8,0.8 6.8,3.6 V5" fill="none" stroke="#e9ad59" stroke-width="1.6"/><rect x="0.8" y="4.8" width="8" height="6.2" fill="#e9ad59"/><rect x="4.3" y="6.8" width="1" height="2.3" fill="#fff"/></svg>
<svg style="position:absolute;left:399.8px;top:192px;" width="10" height="11" viewBox="0 0 10 11"><path d="M2.8,5 V3.6 Q2.8,0.8 4.8,0.8 Q6.8,0.8 6.8,3.6 V5" fill="none" stroke="#e9ad59" stroke-width="1.6"/><rect x="0.8" y="4.8" width="8" height="6.2" fill="#e9ad59"/><rect x="4.3" y="6.8" width="1" height="2.3" fill="#fff"/></svg>
<div class="t" style="left:340.6px;transform-origin:0 0;top:192.00px;font-size:13.18px;line-height:13.18px;color:#111;transform:scaleX(0.9259);">Hie...</div>
<div class="t" style="left:414.5px;transform-origin:0 0;top:192.00px;font-size:13.93px;line-height:13.93px;color:#111;transform:scaleX(0.9259);">Status</div>
<div class="t" style="left:503.6px;transform-origin:0 0;top:192.00px;font-size:13.85px;line-height:13.85px;color:#fff;transform:scaleX(0.9259);">User Name</div>
<svg style="position:absolute;left:664px;top:194px;" width="10" height="7" viewBox="0 0 10 7"><path d="M0.4,1 L9.2,1 L4.8,6Z" fill="#bdbdbd"/></svg>
<div class="t" style="left:679.3px;transform-origin:0 0;top:192.00px;font-size:13.93px;line-height:13.93px;color:#111;transform:scaleX(0.9259);letter-spacing:0.02px;">Membership</div>
<div class="t" style="left:775.6px;transform-origin:0 0;top:192.00px;font-size:13.93px;line-height:13.93px;color:#111;transform:scaleX(0.9259);">Group Name</div>
<div class="t" style="left:951.3px;transform-origin:0 0;top:192.00px;font-size:13.93px;line-height:13.93px;color:#111;transform:scaleX(0.9259);">Group Type (name)</div>
<div style="position:absolute;left:1306px;top:183px;width:16.5px;height:396px;background:linear-gradient(to right,#e9e9e9,#f6f6f6 60%,#fbfbfb);"></div>
<svg style="position:absolute;left:1309px;top:187px;" width="11" height="7" viewBox="0 0 11 7"><path d="M0.8,5.8 L9.8,5.8 L5.3,1Z" fill="#3c4a6b"/></svg>
<div style="position:absolute;left:1307.6px;top:199.5px;width:14px;height:66.7px;background:#8c8c8c;"></div>
<svg style="position:absolute;left:1309px;top:567px;" width="11" height="7" viewBox="0 0 11 7"><path d="M0.8,1 L9.8,1 L5.3,5.8Z" fill="#3c4a6b"/></svg>
<div style="position:absolute;left:320px;top:214px;width:54px;height:28px;background:#8fa7c4;"></div>
<div style="position:absolute;left:374px;top:214px;width:127px;height:28px;background:#fff;"></div>
<div style="position:absolute;left:501px;top:214px;width:175px;height:28px;background:#fff;"></div>
<div style="position:absolute;left:676px;top:214px;width:513px;height:28px;background:#d6d6d6;"></div>
<div style="position:absolute;left:772px;top:214px;width:1px;height:28px;background:#ececec;"></div>
<div style="position:absolute;left:948px;top:214px;width:1px;height:28px;background:#ececec;"></div>
<div style="position:absolute;left:374px;top:214px;width:1px;height:28px;background:#ececec;"></div>
<div style="position:absolute;left:394px;top:214px;width:1px;height:28px;background:#ececec;"></div>
<div style="position:absolute;left:320px;top:214px;width:1px;height:28px;background:#777;"></div>
<div style="position:absolute;left:320px;top:214px;width:869px;height:1px;background:#a0a0a0;"></div>
<div style="position:absolute;left:325px;top:221px;width:16px;height:15.6px;background:#2f3e55;border:1px solid #fff;box-sizing:border-box;"></div>
<div style="position:absolute;left:327.7px;top:227.8px;width:10.6px;height:2.6px;background:#fff;"></div>
<div class="t" style="right:995.2px;transform-origin:100% 0;top:223.00px;font-size:13.93px;line-height:13.93px;color:#111;font-weight:bold;transform:scaleX(0.9259);">1</div>
<svg style="position:absolute;left:372px;top:216px;" width="24" height="24" viewBox="0 0 24 24"><circle cx="13" cy="9.3" r="4.1" fill="#666"/><path d="M6.2,19 V17.5 Q6.2,14.7 9.5,14.7 H16.6 Q19.9,14.7 19.9,17.5 V19Z" fill="#666"/></svg>
<div class="t" style="left:503.6px;transform-origin:0 0;top:223.00px;font-size:13.78px;line-height:13.78px;color:#111;font-weight:bold;transform:scaleX(0.9259);">Ahmed Liu</div>
<div style="position:absolute;left:339px;top:242px;width:35px;height:28px;background:#6aa6e0;"></div>
<div style="position:absolute;left:374px;top:242px;width:815px;height:28px;background:#0078d7;"></div>
<div style="position:absolute;left:374px;top:242px;width:1px;height:28px;background:#f0f6fc;"></div>
<div style="position:absolute;left:394px;top:242px;width:1px;height:28px;background:#f0f6fc;"></div>
<div style="position:absolute;left:772px;top:242px;width:1px;height:28px;background:#f0f6fc;"></div>
<div style="position:absolute;left:948px;top:242px;width:1px;height:28px;background:#f0f6fc;"></div>
<div style="position:absolute;left:499.7px;top:242px;width:1px;height:28px;background:#cfe0f2;"></div>
<div class="t" style="right:994.2px;transform-origin:100% 0;top:251.00px;font-size:13.93px;line-height:13.93px;color:#fff;transform:scaleX(0.9259);">2</div>
<svg style="position:absolute;left:374px;top:247px;" width="20" height="16" viewBox="0 0 20 16"><g stroke="#fff" stroke-width="1"><path d="M11.8,12 V10.9 A3.25,3.4 0 0 1 18.3,10.9 V12Q18.3,12.4 17.9,12.4 H12.2 Q11.8,12.4 11.8,12Z" fill="#555"/><circle cx="14" cy="4.5" r="2.9" fill="#555"/><path d="M3.4,13.6 V12.7 A4.3,4 0 0 1 12,12.7 V13.6 Q12,14.2 11.4,14.2 H4 Q3.4,14.2 3.4,13.6Z" fill="#555"/><circle cx="7.6" cy="6.2" r="3.1" fill="#555"/></g></svg>
<svg style="position:absolute;left:397px;top:248px;" width="16" height="16" viewBox="0 0 16 16"><rect x="0" y="0" width="15.7" height="15.7" fill="#fff"/><path d="M10.50,7.40 L14.10,7.40" stroke="#eaa64a" stroke-width="1.2"/><path d="M9.62,9.52 L12.17,12.07" stroke="#eaa64a" stroke-width="1.2"/><path d="M7.50,10.40 L7.50,14.00" stroke="#eaa64a" stroke-width="1.2"/><path d="M5.38,9.52 L2.83,12.07" stroke="#eaa64a" stroke-width="1.2"/><path d="M4.50,7.40 L0.90,7.40" stroke="#eaa64a" stroke-width="1.2"/><path d="M5.38,5.28 L2.83,2.73" stroke="#eaa64a" stroke-width="1.2"/><path d="M7.50,4.40 L7.50,0.80" stroke="#eaa64a" stroke-width="1.2"/><path d="M9.62,5.28 L12.17,2.73" stroke="#eaa64a" stroke-width="1.2"/><rect x="5.7" y="5.6" width="3.6" height="3.6" rx="1" fill="#fff" stroke="#eaa64a" stroke-width="1.2"/><circle cx="7.5" cy="7.4" r="0.55" fill="#eaa64a"/></svg>
<div class="t" style="left:415.8px;transform-origin:0 0;top:251.00px;font-size:13.73px;line-height:13.73px;color:#fff;transform:scaleX(0.9259);">Created</div>
<div class="t" style="left:503.6px;transform-origin:0 0;top:251.00px;font-size:13.93px;line-height:13.93px;color:#fff;transform:scaleX(0.9259);">Ahmed Liu</div>
<svg style="position:absolute;left:678.7px;top:247.8px;" width="16" height="16" viewBox="0 0 16 16"><circle cx="8" cy="8" r="7.9" fill="#fff"/><circle cx="8" cy="8" r="6.3" fill="#fff" stroke="#179a48" stroke-width="2"/><circle cx="8" cy="6.3" r="2.15" fill="#179a48"/><path d="M4.5,11.7 V11.2 Q4.5,8.9 8,8.9 Q11.5,8.9 11.5,11.2 V11.7Z" fill="#179a48"/></svg>
<div class="t" style="left:697.3px;transform-origin:0 0;top:251.00px;font-size:13.93px;line-height:13.93px;color:#fff;transform:scaleX(0.9259);">Direct</div>
<div class="t" style="left:775.6px;transform-origin:0 0;top:251.00px;font-size:13.93px;line-height:13.93px;color:#fff;transform:scaleX(0.9259);">Enterprise Admins</div>
<div class="t" style="left:951.3px;transform-origin:0 0;top:251.00px;font-size:13.93px;line-height:13.93px;color:#fff;transform:scaleX(0.9259);">Security Group - Universal</div>
<div style="position:absolute;left:339px;top:270px;width:35px;height:28px;background:#6aa6e0;"></div>
<div style="position:absolute;left:374px;top:270px;width:815px;height:28px;background:#0078d7;"></div>
<div style="position:absolute;left:374px;top:270px;width:1px;height:28px;background:#f0f6fc;"></div>
<div style="position:absolute;left:394px;top:270px;width:1px;height:28px;background:#f0f6fc;"></div>
<div style="position:absolute;left:772px;top:270px;width:1px;height:28px;background:#f0f6fc;"></div>
<div style="position:absolute;left:948px;top:270px;width:1px;height:28px;background:#f0f6fc;"></div>
<div style="position:absolute;left:499.7px;top:270px;width:1px;height:28px;background:#cfe0f2;"></div>
<div style="position:absolute;left:339px;top:270px;width:850px;height:1px;background:#eef4fa;"></div>
<div class="t" style="right:994.2px;transform-origin:100% 0;top:279.00px;font-size:13.93px;line-height:13.93px;color:#fff;transform:scaleX(0.9259);">2</div>
<svg style="position:absolute;left:374px;top:275px;" width="20" height="16" viewBox="0 0 20 16"><g stroke="#fff" stroke-width="1"><path d="M11.8,12 V10.9 A3.25,3.4 0 0 1 18.3,10.9 V12Q18.3,12.4 17.9,12.4 H12.2 Q11.8,12.4 11.8,12Z" fill="#555"/><circle cx="14" cy="4.5" r="2.9" fill="#555"/><path d="M3.4,13.6 V12.7 A4.3,4 0 0 1 12,12.7 V13.6 Q12,14.2 11.4,14.2 H4 Q3.4,14.2 3.4,13.6Z" fill="#555"/><circle cx="7.6" cy="6.2" r="3.1" fill="#555"/></g></svg>
<svg style="position:absolute;left:397px;top:276px;" width="16" height="16" viewBox="0 0 16 16"><rect x="0" y="0" width="15.7" height="15.7" fill="#fff"/><path d="M10.50,7.40 L14.10,7.40" stroke="#eaa64a" stroke-width="1.2"/><path d="M9.62,9.52 L12.17,12.07" stroke="#eaa64a" stroke-width="1.2"/><path d="M7.50,10.40 L7.50,14.00" stroke="#eaa64a" stroke-width="1.2"/><path d="M5.38,9.52 L2.83,12.07" stroke="#eaa64a" stroke-width="1.2"/><path d="M4.50,7.40 L0.90,7.40" stroke="#eaa64a" stroke-width="1.2"/><path d="M5.38,5.28 L2.83,2.73" stroke="#eaa64a" stroke-width="1.2"/><path d="M7.50,4.40 L7.50,0.80" stroke="#eaa64a" stroke-width="1.2"/><path d="M9.62,5.28 L12.17,2.73" stroke="#eaa64a" stroke-width="1.2"/><rect x="5.7" y="5.6" width="3.6" height="3.6" rx="1" fill="#fff" stroke="#eaa64a" stroke-width="1.2"/><circle cx="7.5" cy="7.4" r="0.55" fill="#eaa64a"/></svg>
<div class="t" style="left:415.8px;transform-origin:0 0;top:279.00px;font-size:13.73px;line-height:13.73px;color:#fff;transform:scaleX(0.9259);">Created</div>
<div class="t" style="left:503.6px;transform-origin:0 0;top:279.00px;font-size:13.93px;line-height:13.93px;color:#fff;transform:scaleX(0.9259);">Ahmed Liu</div>
<svg style="position:absolute;left:678.7px;top:275.8px;" width="16" height="16" viewBox="0 0 16 16"><circle cx="8" cy="8" r="7.9" fill="#fff"/><circle cx="8" cy="8" r="6.3" fill="#fff" stroke="#179a48" stroke-width="2"/><circle cx="8" cy="6.3" r="2.15" fill="#179a48"/><path d="M4.5,11.7 V11.2 Q4.5,8.9 8,8.9 Q11.5,8.9 11.5,11.2 V11.7Z" fill="#179a48"/></svg>
<div class="t" style="left:697.3px;transform-origin:0 0;top:279.00px;font-size:13.93px;line-height:13.93px;color:#fff;transform:scaleX(0.9259);">Direct</div>
<div class="t" style="left:775.6px;transform-origin:0 0;top:279.00px;font-size:13.93px;line-height:13.93px;color:#fff;transform:scaleX(0.9259);">July Distr</div>
<div class="t" style="left:951.3px;transform-origin:0 0;top:279.00px;font-size:13.93px;line-height:13.93px;color:#fff;transform:scaleX(0.9259);">Distribution Group - Universal</div>
<div style="position:absolute;left:339px;top:298px;width:35px;height:28px;background:#6aa6e0;"></div>
<div style="position:absolute;left:374px;top:298px;width:815px;height:28px;background:#0078d7;"></div>
<div style="position:absolute;left:374px;top:298px;width:1px;height:28px;background:#f0f6fc;"></div>
<div style="position:absolute;left:394px;top:298px;width:1px;height:28px;background:#f0f6fc;"></div>
<div style="position:absolute;left:772px;top:298px;width:1px;height:28px;background:#f0f6fc;"></div>
<div style="position:absolute;left:948px;top:298px;width:1px;height:28px;background:#f0f6fc;"></div>
<div style="position:absolute;left:499.7px;top:298px;width:1px;height:28px;background:#cfe0f2;"></div>
<div style="position:absolute;left:339px;top:298px;width:850px;height:1px;background:#eef4fa;"></div>
<div class="t" style="right:994.2px;transform-origin:100% 0;top:307.00px;font-size:13.93px;line-height:13.93px;color:#fff;transform:scaleX(0.9259);">2</div>
<svg style="position:absolute;left:374px;top:303px;" width="20" height="16" viewBox="0 0 20 16"><g stroke="#fff" stroke-width="1"><path d="M11.8,12 V10.9 A3.25,3.4 0 0 1 18.3,10.9 V12Q18.3,12.4 17.9,12.4 H12.2 Q11.8,12.4 11.8,12Z" fill="#555"/><circle cx="14" cy="4.5" r="2.9" fill="#555"/><path d="M3.4,13.6 V12.7 A4.3,4 0 0 1 12,12.7 V13.6 Q12,14.2 11.4,14.2 H4 Q3.4,14.2 3.4,13.6Z" fill="#555"/><circle cx="7.6" cy="6.2" r="3.1" fill="#555"/></g></svg>
<svg style="position:absolute;left:397px;top:304px;" width="16" height="16" viewBox="0 0 16 16"><rect x="0" y="0" width="15.7" height="15.7" fill="#fff"/><path d="M10.50,7.40 L14.10,7.40" stroke="#eaa64a" stroke-width="1.2"/><path d="M9.62,9.52 L12.17,12.07" stroke="#eaa64a" stroke-width="1.2"/><path d="M7.50,10.40 L7.50,14.00" stroke="#eaa64a" stroke-width="1.2"/><path d="M5.38,9.52 L2.83,12.07" stroke="#eaa64a" stroke-width="1.2"/><path d="M4.50,7.40 L0.90,7.40" stroke="#eaa64a" stroke-width="1.2"/><path d="M5.38,5.28 L2.83,2.73" stroke="#eaa64a" stroke-width="1.2"/><path d="M7.50,4.40 L7.50,0.80" stroke="#eaa64a" stroke-width="1.2"/><path d="M9.62,5.28 L12.17,2.73" stroke="#eaa64a" stroke-width="1.2"/><rect x="5.7" y="5.6" width="3.6" height="3.6" rx="1" fill="#fff" stroke="#eaa64a" stroke-width="1.2"/><circle cx="7.5" cy="7.4" r="0.55" fill="#eaa64a"/></svg>
<div class="t" style="left:415.8px;transform-origin:0 0;top:307.00px;font-size:13.73px;line-height:13.73px;color:#fff;transform:scaleX(0.9259);">Created</div>
<div class="t" style="left:503.6px;transform-origin:0 0;top:307.00px;font-size:13.93px;line-height:13.93px;color:#fff;transform:scaleX(0.9259);">Ahmed Liu</div>
<svg style="position:absolute;left:678.7px;top:303.8px;" width="16" height="16" viewBox="0 0 16 16"><circle cx="8" cy="8" r="7.9" fill="#fff"/><circle cx="8" cy="8" r="6.3" fill="#fff" stroke="#179a48" stroke-width="2"/><circle cx="8" cy="6.3" r="2.15" fill="#179a48"/><path d="M4.5,11.7 V11.2 Q4.5,8.9 8,8.9 Q11.5,8.9 11.5,11.2 V11.7Z" fill="#179a48"/></svg>
<div class="t" style="left:697.3px;transform-origin:0 0;top:307.00px;font-size:13.93px;line-height:13.93px;color:#fff;transform:scaleX(0.9259);">Direct</div>
<div class="t" style="left:775.6px;transform-origin:0 0;top:307.00px;font-size:13.93px;line-height:13.93px;color:#fff;transform:scaleX(0.9259);">Schema Admins</div>
<div class="t" style="left:951.3px;transform-origin:0 0;top:307.00px;font-size:13.93px;line-height:13.93px;color:#fff;transform:scaleX(0.9259);">Security Group - Universal</div>
<div style="position:absolute;left:339px;top:326px;width:35px;height:28px;background:#c8d8e8;"></div>
<div style="position:absolute;left:374px;top:326px;width:1px;height:28px;background:#eeeeee;"></div>
<div style="position:absolute;left:394px;top:326px;width:1px;height:28px;background:#eeeeee;"></div>
<div style="position:absolute;left:772px;top:326px;width:1px;height:28px;background:#eeeeee;"></div>
<div style="position:absolute;left:948px;top:326px;width:1px;height:28px;background:#eeeeee;"></div>
<div style="position:absolute;left:1188.5px;top:326px;width:1px;height:28px;background:#eeeeee;"></div>
<div style="position:absolute;left:374px;top:326px;width:815px;height:1px;background:#eeeeee;"></div>
<div style="position:absolute;left:339px;top:326px;width:35px;height:1px;background:#fff;"></div>
<div class="t" style="right:994.2px;transform-origin:100% 0;top:335.00px;font-size:13.93px;line-height:13.93px;color:#111;transform:scaleX(0.9259);">2</div>
<svg style="position:absolute;left:374px;top:332px;" width="20" height="16" viewBox="0 0 20 16"><path d="M12,9.5 Q12,7 14.8,7 Q17.6,7 17.6,9.5Z" fill="#555"/><circle cx="14.3" cy="4.4" r="2.2" fill="#555"/><path d="M4.6,11.8 Q4.6,8.5 8,8.5 Q11.5,8.5 11.5,11.8Z" fill="#555"/><circle cx="8" cy="5.9" r="2.4" fill="#555"/></svg>
<div class="t" style="left:503.6px;transform-origin:0 0;top:335.00px;font-size:13.93px;line-height:13.93px;color:#111;transform:scaleX(0.9259);">Ahmed Liu</div>
<svg style="position:absolute;left:678.7px;top:331.8px;" width="16" height="16" viewBox="0 0 16 16"><circle cx="8" cy="8" r="7.9" fill="#fff"/><circle cx="8" cy="8" r="6.3" fill="#fff" stroke="#a3a3a3" stroke-width="2"/><circle cx="8" cy="6.3" r="2.15" fill="#a3a3a3"/><path d="M4.5,11.7 V11.2 Q4.5,8.9 8,8.9 Q11.5,8.9 11.5,11.2 V11.7Z" fill="#a3a3a3"/></svg>
<div class="t" style="left:697.3px;transform-origin:0 0;top:335.00px;font-size:13.93px;line-height:13.93px;color:#111;transform:scaleX(0.9259);">Inherited</div>
<div class="t" style="left:775.6px;transform-origin:0 0;top:335.00px;font-size:13.93px;line-height:13.93px;color:#111;transform:scaleX(0.9259);">Users</div>
<div class="t" style="left:951.3px;transform-origin:0 0;top:335.00px;font-size:13.93px;line-height:13.93px;color:#111;transform:scaleX(0.9259);">Security Group - Domain Local</div>
<div style="position:absolute;left:339px;top:354px;width:35px;height:28px;background:#c8d8e8;"></div>
<div style="position:absolute;left:374px;top:354px;width:1px;height:28px;background:#eeeeee;"></div>
<div style="position:absolute;left:394px;top:354px;width:1px;height:28px;background:#eeeeee;"></div>
<div style="position:absolute;left:772px;top:354px;width:1px;height:28px;background:#eeeeee;"></div>
<div style="position:absolute;left:948px;top:354px;width:1px;height:28px;background:#eeeeee;"></div>
<div style="position:absolute;left:1188.5px;top:354px;width:1px;height:28px;background:#eeeeee;"></div>
<div style="position:absolute;left:374px;top:354px;width:815px;height:1px;background:#eeeeee;"></div>
<div style="position:absolute;left:339px;top:354px;width:35px;height:1px;background:#fff;"></div>
<div class="t" style="right:994.2px;transform-origin:100% 0;top:363.00px;font-size:13.93px;line-height:13.93px;color:#111;transform:scaleX(0.9259);">2</div>
<svg style="position:absolute;left:374px;top:360px;" width="20" height="16" viewBox="0 0 20 16"><path d="M12,9.5 Q12,7 14.8,7 Q17.6,7 17.6,9.5Z" fill="#555"/><circle cx="14.3" cy="4.4" r="2.2" fill="#555"/><path d="M4.6,11.8 Q4.6,8.5 8,8.5 Q11.5,8.5 11.5,11.8Z" fill="#555"/><circle cx="8" cy="5.9" r="2.4" fill="#555"/></svg>
<div class="t" style="left:503.6px;transform-origin:0 0;top:363.00px;font-size:13.93px;line-height:13.93px;color:#111;transform:scaleX(0.9259);">Ahmed Liu</div>
<svg style="position:absolute;left:678.7px;top:359.8px;" width="16" height="16" viewBox="0 0 16 16"><circle cx="8" cy="8" r="7.9" fill="#fff"/><circle cx="8" cy="8" r="6.3" fill="#fff" stroke="#179a48" stroke-width="2"/><path d="M6.3,6.2 L8.5,4.6 V11.6" fill="none" stroke="#1f6b3a" stroke-width="2"/></svg>
<div class="t" style="left:697.3px;transform-origin:0 0;top:363.00px;font-size:13.93px;line-height:13.93px;color:#111;transform:scaleX(0.9259);">Primary</div>
<div class="t" style="left:775.6px;transform-origin:0 0;top:363.00px;font-size:13.93px;line-height:13.93px;color:#111;transform:scaleX(0.9259);">Domain Users</div>
<div class="t" style="left:951.3px;transform-origin:0 0;top:363.00px;font-size:13.93px;line-height:13.93px;color:#111;transform:scaleX(0.9259);">Security Group - Global</div>
<div style="position:absolute;left:339px;top:382px;width:35px;height:28px;background:#c8d8e8;"></div>
<div style="position:absolute;left:374px;top:382px;width:1px;height:28px;background:#eeeeee;"></div>
<div style="position:absolute;left:394px;top:382px;width:1px;height:28px;background:#eeeeee;"></div>
<div style="position:absolute;left:772px;top:382px;width:1px;height:28px;background:#eeeeee;"></div>
<div style="position:absolute;left:948px;top:382px;width:1px;height:28px;background:#eeeeee;"></div>
<div style="position:absolute;left:1188.5px;top:382px;width:1px;height:28px;background:#eeeeee;"></div>
<div style="position:absolute;left:374px;top:382px;width:815px;height:1px;background:#eeeeee;"></div>
<div style="position:absolute;left:339px;top:382px;width:35px;height:1px;background:#fff;"></div>
<div class="t" style="right:994.2px;transform-origin:100% 0;top:391.00px;font-size:13.93px;line-height:13.93px;color:#111;transform:scaleX(0.9259);">2</div>
<svg style="position:absolute;left:374px;top:388px;" width="20" height="16" viewBox="0 0 20 16"><path d="M12,9.5 Q12,7 14.8,7 Q17.6,7 17.6,9.5Z" fill="#555"/><circle cx="14.3" cy="4.4" r="2.2" fill="#555"/><path d="M4.6,11.8 Q4.6,8.5 8,8.5 Q11.5,8.5 11.5,11.8Z" fill="#555"/><circle cx="8" cy="5.9" r="2.4" fill="#555"/></svg>
<div class="t" style="left:503.6px;transform-origin:0 0;top:391.00px;font-size:13.93px;line-height:13.93px;color:#111;transform:scaleX(0.9259);">Ahmed Liu</div>
<svg style="position:absolute;left:678.7px;top:387.8px;" width="16" height="16" viewBox="0 0 16 16"><circle cx="8" cy="8" r="7.9" fill="#fff"/><circle cx="8" cy="8" r="6.3" fill="#fff" stroke="#179a48" stroke-width="2"/><circle cx="8" cy="6.3" r="2.15" fill="#179a48"/><path d="M4.5,11.7 V11.2 Q4.5,8.9 8,8.9 Q11.5,8.9 11.5,11.2 V11.7Z" fill="#179a48"/></svg>
<div class="t" style="left:697.3px;transform-origin:0 0;top:391.00px;font-size:13.93px;line-height:13.93px;color:#111;transform:scaleX(0.9259);">Direct</div>
<div class="t" style="left:775.6px;transform-origin:0 0;top:391.00px;font-size:13.93px;line-height:13.93px;color:#111;transform:scaleX(0.9259);">Import5testt</div>
<div class="t" style="left:951.3px;transform-origin:0 0;top:391.00px;font-size:13.93px;line-height:13.93px;color:#111;transform:scaleX(0.9259);">Security Group - Domain Local</div>
<div style="position:absolute;left:339px;top:410px;width:35px;height:28px;background:#c8d8e8;"></div>
<div style="position:absolute;left:374px;top:410px;width:1px;height:28px;background:#eeeeee;"></div>
<div style="position:absolute;left:394px;top:410px;width:1px;height:28px;background:#eeeeee;"></div>
<div style="position:absolute;left:772px;top:410px;width:1px;height:28px;background:#eeeeee;"></div>
<div style="position:absolute;left:948px;top:410px;width:1px;height:28px;background:#eeeeee;"></div>
<div style="position:absolute;left:1188.5px;top:410px;width:1px;height:28px;background:#eeeeee;"></div>
<div style="position:absolute;left:374px;top:410px;width:815px;height:1px;background:#eeeeee;"></div>
<div style="position:absolute;left:339px;top:410px;width:35px;height:1px;background:#fff;"></div>
<div class="t" style="right:994.2px;transform-origin:100% 0;top:419.00px;font-size:13.93px;line-height:13.93px;color:#111;transform:scaleX(0.9259);">2</div>
<svg style="position:absolute;left:374px;top:416px;" width="20" height="16" viewBox="0 0 20 16"><path d="M12,9.5 Q12,7 14.8,7 Q17.6,7 17.6,9.5Z" fill="#555"/><circle cx="14.3" cy="4.4" r="2.2" fill="#555"/><path d="M4.6,11.8 Q4.6,8.5 8,8.5 Q11.5,8.5 11.5,11.8Z" fill="#555"/><circle cx="8" cy="5.9" r="2.4" fill="#555"/></svg>
<div class="t" style="left:503.6px;transform-origin:0 0;top:419.00px;font-size:13.93px;line-height:13.93px;color:#111;transform:scaleX(0.9259);">Ahmed Liu</div>
<svg style="position:absolute;left:678.7px;top:415.8px;" width="16" height="16" viewBox="0 0 16 16"><circle cx="8" cy="8" r="7.9" fill="#fff"/><circle cx="8" cy="8" r="6.3" fill="#fff" stroke="#179a48" stroke-width="2"/><circle cx="8" cy="6.3" r="2.15" fill="#179a48"/><path d="M4.5,11.7 V11.2 Q4.5,8.9 8,8.9 Q11.5,8.9 11.5,11.2 V11.7Z" fill="#179a48"/></svg>
<div class="t" style="left:697.3px;transform-origin:0 0;top:419.00px;font-size:13.93px;line-height:13.93px;color:#111;transform:scaleX(0.9259);">Direct</div>
<div class="t" style="left:775.6px;transform-origin:0 0;top:419.00px;font-size:13.93px;line-height:13.93px;color:#111;transform:scaleX(0.9259);">SceC</div>
<div class="t" style="left:951.3px;transform-origin:0 0;top:419.00px;font-size:13.93px;line-height:13.93px;color:#111;transform:scaleX(0.9259);">Security Group - Universal</div>
<div style="position:absolute;left:320px;top:438px;width:54px;height:28px;background:#8fa7c4;"></div>
<div style="position:absolute;left:374px;top:438px;width:127px;height:28px;background:#fff;"></div>
<div style="position:absolute;left:501px;top:438px;width:175px;height:28px;background:#fff;"></div>
<div style="position:absolute;left:676px;top:438px;width:513px;height:28px;background:#d6d6d6;"></div>
<div style="position:absolute;left:772px;top:438px;width:1px;height:28px;background:#ececec;"></div>
<div style="position:absolute;left:948px;top:438px;width:1px;height:28px;background:#ececec;"></div>
<div style="position:absolute;left:374px;top:438px;width:1px;height:28px;background:#ececec;"></div>
<div style="position:absolute;left:394px;top:438px;width:1px;height:28px;background:#ececec;"></div>
<div style="position:absolute;left:320px;top:438px;width:1px;height:28px;background:#777;"></div>
<div style="position:absolute;left:320px;top:438px;width:869px;height:1px;background:#777;"></div>
<div style="position:absolute;left:325px;top:445px;width:16px;height:15.6px;background:#2f3e55;border:1px solid #fff;box-sizing:border-box;"></div>
<div style="position:absolute;left:327.7px;top:451.8px;width:10.6px;height:2.6px;background:#fff;"></div>
<div class="t" style="right:995.2px;transform-origin:100% 0;top:447.00px;font-size:13.93px;line-height:13.93px;color:#111;font-weight:bold;transform:scaleX(0.9259);">1</div>
<svg style="position:absolute;left:372px;top:440px;" width="24" height="24" viewBox="0 0 24 24"><circle cx="13" cy="9.3" r="4.1" fill="#666"/><path d="M6.2,19 V17.5 Q6.2,14.7 9.5,14.7 H16.6 Q19.9,14.7 19.9,17.5 V19Z" fill="#666"/></svg>
<div class="t" style="left:503.6px;transform-origin:0 0;top:447.00px;font-size:13.78px;line-height:13.78px;color:#111;font-weight:bold;transform:scaleX(0.9259);">Adrienne Gonzalez</div>
<div style="position:absolute;left:339px;top:466px;width:35px;height:28px;background:#6aa6e0;"></div>
<div style="position:absolute;left:374px;top:466px;width:815px;height:28px;background:#0078d7;"></div>
<div style="position:absolute;left:374px;top:466px;width:1px;height:28px;background:#f0f6fc;"></div>
<div style="position:absolute;left:394px;top:466px;width:1px;height:28px;background:#f0f6fc;"></div>
<div style="position:absolute;left:772px;top:466px;width:1px;height:28px;background:#f0f6fc;"></div>
<div style="position:absolute;left:948px;top:466px;width:1px;height:28px;background:#f0f6fc;"></div>
<div style="position:absolute;left:499.7px;top:466px;width:1px;height:28px;background:#cfe0f2;"></div>
<div class="t" style="right:994.2px;transform-origin:100% 0;top:475.00px;font-size:13.93px;line-height:13.93px;color:#fff;transform:scaleX(0.9259);">2</div>
<svg style="position:absolute;left:374px;top:471px;" width="20" height="16" viewBox="0 0 20 16"><g stroke="#fff" stroke-width="1"><path d="M11.8,12 V10.9 A3.25,3.4 0 0 1 18.3,10.9 V12Q18.3,12.4 17.9,12.4 H12.2 Q11.8,12.4 11.8,12Z" fill="#555"/><circle cx="14" cy="4.5" r="2.9" fill="#555"/><path d="M3.4,13.6 V12.7 A4.3,4 0 0 1 12,12.7 V13.6 Q12,14.2 11.4,14.2 H4 Q3.4,14.2 3.4,13.6Z" fill="#555"/><circle cx="7.6" cy="6.2" r="3.1" fill="#555"/></g></svg>
<svg style="position:absolute;left:397px;top:472px;" width="16" height="16" viewBox="0 0 16 16"><rect x="0" y="0" width="15.7" height="15.7" fill="#fff"/><path d="M10.50,7.40 L14.10,7.40" stroke="#eaa64a" stroke-width="1.2"/><path d="M9.62,9.52 L12.17,12.07" stroke="#eaa64a" stroke-width="1.2"/><path d="M7.50,10.40 L7.50,14.00" stroke="#eaa64a" stroke-width="1.2"/><path d="M5.38,9.52 L2.83,12.07" stroke="#eaa64a" stroke-width="1.2"/><path d="M4.50,7.40 L0.90,7.40" stroke="#eaa64a" stroke-width="1.2"/><path d="M5.38,5.28 L2.83,2.73" stroke="#eaa64a" stroke-width="1.2"/><path d="M7.50,4.40 L7.50,0.80" stroke="#eaa64a" stroke-width="1.2"/><path d="M9.62,5.28 L12.17,2.73" stroke="#eaa64a" stroke-width="1.2"/><rect x="5.7" y="5.6" width="3.6" height="3.6" rx="1" fill="#fff" stroke="#eaa64a" stroke-width="1.2"/><circle cx="7.5" cy="7.4" r="0.55" fill="#eaa64a"/></svg>
<div class="t" style="left:415.8px;transform-origin:0 0;top:475.00px;font-size:13.73px;line-height:13.73px;color:#fff;transform:scaleX(0.9259);">Created</div>
<div class="t" style="left:503.6px;transform-origin:0 0;top:475.00px;font-size:13.93px;line-height:13.93px;color:#fff;transform:scaleX(0.9259);">Adrienne Gonzalez</div>
<svg style="position:absolute;left:678.7px;top:471.8px;" width="16" height="16" viewBox="0 0 16 16"><circle cx="8" cy="8" r="7.9" fill="#fff"/><circle cx="8" cy="8" r="6.3" fill="#fff" stroke="#179a48" stroke-width="2"/><circle cx="8" cy="6.3" r="2.15" fill="#179a48"/><path d="M4.5,11.7 V11.2 Q4.5,8.9 8,8.9 Q11.5,8.9 11.5,11.2 V11.7Z" fill="#179a48"/></svg>
<div class="t" style="left:697.3px;transform-origin:0 0;top:475.00px;font-size:13.93px;line-height:13.93px;color:#fff;transform:scaleX(0.9259);">Direct</div>
<div class="t" style="left:775.6px;transform-origin:0 0;top:475.00px;font-size:13.93px;line-height:13.93px;color:#fff;transform:scaleX(0.9259);">Enterprise Admins</div>
<div class="t" style="left:951.3px;transform-origin:0 0;top:475.00px;font-size:13.93px;line-height:13.93px;color:#fff;transform:scaleX(0.9259);">Security Group - Universal</div>
<div style="position:absolute;left:339px;top:494px;width:35px;height:28px;background:#6aa6e0;"></div>
<div style="position:absolute;left:374px;top:494px;width:815px;height:28px;background:#0078d7;"></div>
<div style="position:absolute;left:374px;top:494px;width:1px;height:28px;background:#f0f6fc;"></div>
<div style="position:absolute;left:394px;top:494px;width:1px;height:28px;background:#f0f6fc;"></div>
<div style="position:absolute;left:772px;top:494px;width:1px;height:28px;background:#f0f6fc;"></div>
<div style="position:absolute;left:948px;top:494px;width:1px;height:28px;background:#f0f6fc;"></div>
<div style="position:absolute;left:499.7px;top:494px;width:1px;height:28px;background:#cfe0f2;"></div>
<div style="position:absolute;left:339px;top:494px;width:850px;height:1px;background:#eef4fa;"></div>
<div class="t" style="right:994.2px;transform-origin:100% 0;top:503.00px;font-size:13.93px;line-height:13.93px;color:#fff;transform:scaleX(0.9259);">2</div>
<svg style="position:absolute;left:374px;top:499px;" width="20" height="16" viewBox="0 0 20 16"><g stroke="#fff" stroke-width="1"><path d="M11.8,12 V10.9 A3.25,3.4 0 0 1 18.3,10.9 V12Q18.3,12.4 17.9,12.4 H12.2 Q11.8,12.4 11.8,12Z" fill="#555"/><circle cx="14" cy="4.5" r="2.9" fill="#555"/><path d="M3.4,13.6 V12.7 A4.3,4 0 0 1 12,12.7 V13.6 Q12,14.2 11.4,14.2 H4 Q3.4,14.2 3.4,13.6Z" fill="#555"/><circle cx="7.6" cy="6.2" r="3.1" fill="#555"/></g></svg>
<svg style="position:absolute;left:397px;top:500px;" width="16" height="16" viewBox="0 0 16 16"><rect x="0" y="0" width="15.7" height="15.7" fill="#fff"/><path d="M10.50,7.40 L14.10,7.40" stroke="#eaa64a" stroke-width="1.2"/><path d="M9.62,9.52 L12.17,12.07" stroke="#eaa64a" stroke-width="1.2"/><path d="M7.50,10.40 L7.50,14.00" stroke="#eaa64a" stroke-width="1.2"/><path d="M5.38,9.52 L2.83,12.07" stroke="#eaa64a" stroke-width="1.2"/><path d="M4.50,7.40 L0.90,7.40" stroke="#eaa64a" stroke-width="1.2"/><path d="M5.38,5.28 L2.83,2.73" stroke="#eaa64a" stroke-width="1.2"/><path d="M7.50,4.40 L7.50,0.80" stroke="#eaa64a" stroke-width="1.2"/><path d="M9.62,5.28 L12.17,2.73" stroke="#eaa64a" stroke-width="1.2"/><rect x="5.7" y="5.6" width="3.6" height="3.6" rx="1" fill="#fff" stroke="#eaa64a" stroke-width="1.2"/><circle cx="7.5" cy="7.4" r="0.55" fill="#eaa64a"/></svg>
<div class="t" style="left:415.8px;transform-origin:0 0;top:503.00px;font-size:13.73px;line-height:13.73px;color:#fff;transform:scaleX(0.9259);">Created</div>
<div class="t" style="left:503.6px;transform-origin:0 0;top:503.00px;font-size:13.93px;line-height:13.93px;color:#fff;transform:scaleX(0.9259);">Adrienne Gonzalez</div>
<svg style="position:absolute;left:678.7px;top:499.8px;" width="16" height="16" viewBox="0 0 16 16"><circle cx="8" cy="8" r="7.9" fill="#fff"/><circle cx="8" cy="8" r="6.3" fill="#fff" stroke="#179a48" stroke-width="2"/><circle cx="8" cy="6.3" r="2.15" fill="#179a48"/><path d="M4.5,11.7 V11.2 Q4.5,8.9 8,8.9 Q11.5,8.9 11.5,11.2 V11.7Z" fill="#179a48"/></svg>
<div class="t" style="left:697.3px;transform-origin:0 0;top:503.00px;font-size:13.93px;line-height:13.93px;color:#fff;transform:scaleX(0.9259);">Direct</div>
<div class="t" style="left:775.6px;transform-origin:0 0;top:503.00px;font-size:13.93px;line-height:13.93px;color:#fff;transform:scaleX(0.9259);">July Distr</div>
<div class="t" style="left:951.3px;transform-origin:0 0;top:503.00px;font-size:13.93px;line-height:13.93px;color:#fff;transform:scaleX(0.9259);">Distribution Group - Universal</div>
<div style="position:absolute;left:339px;top:522px;width:35px;height:28px;background:#6aa6e0;"></div>
<div style="position:absolute;left:374px;top:522px;width:815px;height:28px;background:#0078d7;"></div>
<div style="position:absolute;left:374px;top:522px;width:1px;height:28px;background:#f0f6fc;"></div>
<div style="position:absolute;left:394px;top:522px;width:1px;height:28px;background:#f0f6fc;"></div>
<div style="position:absolute;left:772px;top:522px;width:1px;height:28px;background:#f0f6fc;"></div>
<div style="position:absolute;left:948px;top:522px;width:1px;height:28px;background:#f0f6fc;"></div>
<div style="position:absolute;left:499.7px;top:522px;width:1px;height:28px;background:#cfe0f2;"></div>
<div style="position:absolute;left:339px;top:522px;width:850px;height:1px;background:#eef4fa;"></div>
<div class="t" style="right:994.2px;transform-origin:100% 0;top:531.00px;font-size:13.93px;line-height:13.93px;color:#fff;transform:scaleX(0.9259);">2</div>
<svg style="position:absolute;left:374px;top:527px;" width="20" height="16" viewBox="0 0 20 16"><g stroke="#fff" stroke-width="1"><path d="M11.8,12 V10.9 A3.25,3.4 0 0 1 18.3,10.9 V12Q18.3,12.4 17.9,12.4 H12.2 Q11.8,12.4 11.8,12Z" fill="#555"/><circle cx="14" cy="4.5" r="2.9" fill="#555"/><path d="M3.4,13.6 V12.7 A4.3,4 0 0 1 12,12.7 V13.6 Q12,14.2 11.4,14.2 H4 Q3.4,14.2 3.4,13.6Z" fill="#555"/><circle cx="7.6" cy="6.2" r="3.1" fill="#555"/></g></svg>
<svg style="position:absolute;left:397px;top:528px;" width="16" height="16" viewBox="0 0 16 16"><rect x="0" y="0" width="15.7" height="15.7" fill="#fff"/><path d="M10.50,7.40 L14.10,7.40" stroke="#eaa64a" stroke-width="1.2"/><path d="M9.62,9.52 L12.17,12.07" stroke="#eaa64a" stroke-width="1.2"/><path d="M7.50,10.40 L7.50,14.00" stroke="#eaa64a" stroke-width="1.2"/><path d="M5.38,9.52 L2.83,12.07" stroke="#eaa64a" stroke-width="1.2"/><path d="M4.50,7.40 L0.90,7.40" stroke="#eaa64a" stroke-width="1.2"/><path d="M5.38,5.28 L2.83,2.73" stroke="#eaa64a" stroke-width="1.2"/><path d="M7.50,4.40 L7.50,0.80" stroke="#eaa64a" stroke-width="1.2"/><path d="M9.62,5.28 L12.17,2.73" stroke="#eaa64a" stroke-width="1.2"/><rect x="5.7" y="5.6" width="3.6" height="3.6" rx="1" fill="#fff" stroke="#eaa64a" stroke-width="1.2"/><circle cx="7.5" cy="7.4" r="0.55" fill="#eaa64a"/></svg>
<div class="t" style="left:415.8px;transform-origin:0 0;top:531.00px;font-size:13.73px;line-height:13.73px;color:#fff;transform:scaleX(0.9259);">Created</div>
<div class="t" style="left:503.6px;transform-origin:0 0;top:531.00px;font-size:13.93px;line-height:13.93px;color:#fff;transform:scaleX(0.9259);">Adrienne Gonzalez</div>
<svg style="position:absolute;left:678.7px;top:527.8px;" width="16" height="16" viewBox="0 0 16 16"><circle cx="8" cy="8" r="7.9" fill="#fff"/><circle cx="8" cy="8" r="6.3" fill="#fff" stroke="#179a48" stroke-width="2"/><circle cx="8" cy="6.3" r="2.15" fill="#179a48"/><path d="M4.5,11.7 V11.2 Q4.5,8.9 8,8.9 Q11.5,8.9 11.5,11.2 V11.7Z" fill="#179a48"/></svg>
<div class="t" style="left:697.3px;transform-origin:0 0;top:531.00px;font-size:13.93px;line-height:13.93px;color:#fff;transform:scaleX(0.9259);">Direct</div>
<div class="t" style="left:775.6px;transform-origin:0 0;top:531.00px;font-size:13.93px;line-height:13.93px;color:#fff;transform:scaleX(0.9259);">Schema Admins</div>
<div class="t" style="left:951.3px;transform-origin:0 0;top:531.00px;font-size:13.93px;line-height:13.93px;color:#fff;transform:scaleX(0.9259);">Security Group - Universal</div>
<div style="position:absolute;left:339px;top:550px;width:35px;height:28px;background:#c8d8e8;"></div>
<div style="position:absolute;left:374px;top:550px;width:1px;height:28px;background:#eeeeee;"></div>
<div style="position:absolute;left:394px;top:550px;width:1px;height:28px;background:#eeeeee;"></div>
<div style="position:absolute;left:772px;top:550px;width:1px;height:28px;background:#eeeeee;"></div>
<div style="position:absolute;left:948px;top:550px;width:1px;height:28px;background:#eeeeee;"></div>
<div style="position:absolute;left:1188.5px;top:550px;width:1px;height:28px;background:#eeeeee;"></div>
<div style="position:absolute;left:374px;top:550px;width:815px;height:1px;background:#eeeeee;"></div>
<div style="position:absolute;left:339px;top:550px;width:35px;height:1px;background:#fff;"></div>
<div class="t" style="right:994.2px;transform-origin:100% 0;top:559.00px;font-size:13.93px;line-height:13.93px;color:#111;transform:scaleX(0.9259);">2</div>
<svg style="position:absolute;left:374px;top:556px;" width="20" height="16" viewBox="0 0 20 16"><path d="M12,9.5 Q12,7 14.8,7 Q17.6,7 17.6,9.5Z" fill="#555"/><circle cx="14.3" cy="4.4" r="2.2" fill="#555"/><path d="M4.6,11.8 Q4.6,8.5 8,8.5 Q11.5,8.5 11.5,11.8Z" fill="#555"/><circle cx="8" cy="5.9" r="2.4" fill="#555"/></svg>
<div class="t" style="left:503.6px;transform-origin:0 0;top:559.00px;font-size:13.93px;line-height:13.93px;color:#111;transform:scaleX(0.9259);">Adrienne Gonzalez</div>
<svg style="position:absolute;left:678.7px;top:555.8px;" width="16" height="16" viewBox="0 0 16 16"><circle cx="8" cy="8" r="7.9" fill="#fff"/><circle cx="8" cy="8" r="6.3" fill="#fff" stroke="#a3a3a3" stroke-width="2"/><circle cx="8" cy="6.3" r="2.15" fill="#a3a3a3"/><path d="M4.5,11.7 V11.2 Q4.5,8.9 8,8.9 Q11.5,8.9 11.5,11.2 V11.7Z" fill="#a3a3a3"/></svg>
<div class="t" style="left:697.3px;transform-origin:0 0;top:559.00px;font-size:13.93px;line-height:13.93px;color:#111;transform:scaleX(0.9259);">Inherited</div>
<div class="t" style="left:775.6px;transform-origin:0 0;top:559.00px;font-size:13.93px;line-height:13.93px;color:#111;transform:scaleX(0.9259);">Users</div>
<div class="t" style="left:951.3px;transform-origin:0 0;top:559.00px;font-size:13.93px;line-height:13.93px;color:#111;transform:scaleX(0.9259);">Security Group - Domain Local</div>
<div style="position:absolute;left:320px;top:242px;width:869px;height:1px;background:#777;"></div>
<div style="position:absolute;left:320px;top:466px;width:869px;height:1px;background:#777;"></div>
<div style="position:absolute;left:320px;top:578px;width:986px;height:1px;background:#e4e4e4;"></div>
<div style="position:absolute;left:0px;top:578px;width:300px;height:1px;background:#d6dadc;"></div>
<div style="position:absolute;left:501px;top:214px;width:1px;height:364px;background:#1a73d0;"></div>
<div style="position:absolute;left:675.6px;top:214px;width:1.5px;height:364px;background:#22416a;"></div>
<div style="position:absolute;left:589px;top:47px;width:216px;height:105px;border:3px solid #ff0f9b;box-sizing:border-box;box-shadow:2px 4px 5px rgba(0,0,0,0.28), inset 2px 2px 3px rgba(0,0,0,0.12);z-index:50;"></div>
</body></html>
